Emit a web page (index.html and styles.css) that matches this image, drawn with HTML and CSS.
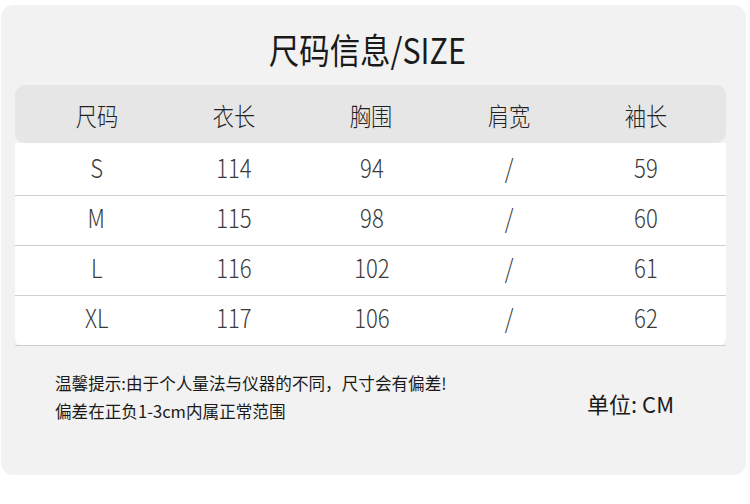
FILE: index.html
```html
<!DOCTYPE html>
<html lang="zh-CN">
<head>
<meta charset="utf-8">
<title>尺码信息</title>
<link rel="stylesheet" href="styles.css">
</head>
<body>
<div class="card">
  <div class="title"><span class="squeeze">尺码信息/SIZE</span></div>
  <div class="table">
    <div class="row head">
      <div class="cell"><span class="squeeze">尺码</span></div>
      <div class="cell"><span class="squeeze">衣长</span></div>
      <div class="cell"><span class="squeeze">胸围</span></div>
      <div class="cell"><span class="squeeze">肩宽</span></div>
      <div class="cell"><span class="squeeze">袖长</span></div>
    </div>
    <div class="body">
      <div class="row data">
        <div class="cell"><span class="squeeze">S</span></div>
        <div class="cell"><span class="squeeze">114</span></div>
        <div class="cell"><span class="squeeze">94</span></div>
        <div class="cell"><span class="squeeze">/</span></div>
        <div class="cell"><span class="squeeze">59</span></div>
      </div>
      <div class="row data">
        <div class="cell"><span class="squeeze">M</span></div>
        <div class="cell"><span class="squeeze">115</span></div>
        <div class="cell"><span class="squeeze">98</span></div>
        <div class="cell"><span class="squeeze">/</span></div>
        <div class="cell"><span class="squeeze">60</span></div>
      </div>
      <div class="row data">
        <div class="cell"><span class="squeeze">L</span></div>
        <div class="cell"><span class="squeeze">116</span></div>
        <div class="cell"><span class="squeeze">102</span></div>
        <div class="cell"><span class="squeeze">/</span></div>
        <div class="cell"><span class="squeeze">61</span></div>
      </div>
      <div class="row data">
        <div class="cell"><span class="squeeze">XL</span></div>
        <div class="cell"><span class="squeeze">117</span></div>
        <div class="cell"><span class="squeeze">106</span></div>
        <div class="cell"><span class="squeeze">/</span></div>
        <div class="cell"><span class="squeeze">62</span></div>
      </div>
    </div>
  </div>
  <div class="footer">
    <div class="notes">
      <p>温馨提示:由于个人量法与仪器的不同，尺寸会有偏差!</p>
      <p>偏差在正负1-3cm内属正常范围</p>
    </div>
    <div class="unit">单位: CM</div>
  </div>
</div>
</body>
</html>
```

FILE: styles.css
```css
html, body {
  margin: 0;
  padding: 0;
  background: #ffffff;
}

body {
  font-family: "Noto Sans CJK SC", "Noto Sans", sans-serif;
  color: #222222;
}

.card {
  box-sizing: border-box;
  margin: 5px 4px 0 1px;
  height: 470px;
  background: #f2f2f2;
  border-radius: 12px;
  padding: 0 20px 0 14px;
  display: flex;
  flex-direction: column;
}

.squeeze {
  display: inline-block;
  transform: scaleX(0.85);
  white-space: nowrap;
}

.title {
  box-sizing: border-box;
  height: 80px;
  padding-top: 6px;
  padding-right: 6px;
  display: flex;
  align-items: center;
  justify-content: center;
  font-size: 35px;
  font-weight: 400;
  color: #1a1a1a;
}

.title .squeeze {
  transform: scaleX(0.87);
}

.row {
  display: grid;
  grid-template-columns: repeat(5, 1fr);
  padding: 0 11px 0 13px;
  align-items: center;
}

.cell {
  text-align: center;
}

.head {
  box-sizing: border-box;
  height: 58px;
  padding-top: 2px;
  background: #e6e6e6;
  border-radius: 10px;
  font-size: 25px;
  font-weight: 300;
  color: #222222;
}

.body {
  background: #ffffff;
  padding-top: 3px;
  border-radius: 0 0 8px 8px;
}

.data {
  box-sizing: border-box;
  height: 50px;
  padding-bottom: 9px;
  border-bottom: 1px solid #cfcfcf;
  font-size: 26px;
  font-weight: 300;
  color: #3a3a3a;
}

.footer {
  display: flex;
  justify-content: space-between;
  align-items: flex-start;
  padding: 23px 52px 0 40px;
}

.notes p {
  margin: 0;
  font-size: 16.6px;
  line-height: 28px;
  color: #1a1a1a;
}

.unit {
  margin-top: 20px;
  font-size: 22px;
  line-height: 28px;
  color: #1a1a1a;
}
```
